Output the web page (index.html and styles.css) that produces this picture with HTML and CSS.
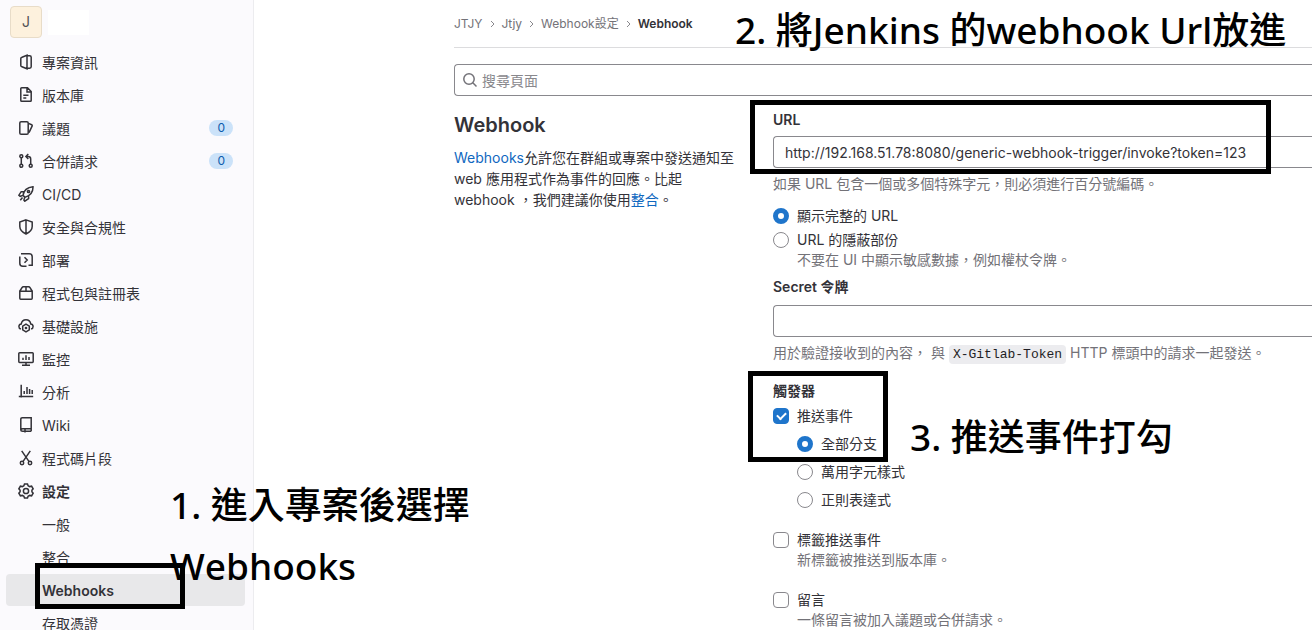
FILE: index.html
```html
<!DOCTYPE html>
<html lang="zh-Hant">
<head>
<meta charset="utf-8">
<title>Webhook</title>
<link rel="stylesheet" href="styles.css">
</head>
<body>
<div class="shell">
  <aside class="sidebar">
    <a class="project" href="#"><span class="avatar">J</span><span class="project-name"></span></a>
    <nav>
      <ul class="menu">
        <li><a class="item" href="#"><svg class="icon" viewBox="0 0 16 16"><path d="M9 1.2 4 3.2Q2.8 3.6 2.8 4.6v6.8q0 1 1.2 1.4l5 2zM9 1.8h2.6q1.6 0 1.6 1.4v9.6q0 1.4-1.6 1.4H9"/></svg><span class="name">專案資訊</span></a></li>
        <li><a class="item" href="#"><svg class="icon" viewBox="0 0 16 16"><path d="M3.7.8h5.8l3.7 3.7v9q0 .8-.8.8H3.7q-.9 0-.9-.9V1.7q0-.9.9-.9zM9 1v4h4M5.3 8.3h5.2M5.3 11h3"/></svg><span class="name">版本庫</span></a></li>
        <li><a class="item" href="#"><svg class="icon" viewBox="0 0 16 16"><rect x="1.8" y="1.8" width="8.4" height="12.4" rx="1.3"/><path d="m10.5 3.4 3.2 1.3q.8.4.5 1.2L11 12.6"/></svg><span class="name">議題</span><span class="badge">0</span></a></li>
        <li><a class="item" href="#"><svg class="icon" viewBox="0 0 16 16"><circle cx="3.3" cy="3.2" r="1.5"/><circle cx="3.3" cy="12.8" r="1.5"/><circle cx="12.7" cy="12.8" r="1.5"/><path d="M3.3 5v6M12.7 11V6q0-2.5-2.7-2.5H8.5M10.3 1 7.9 3.5 10.3 6"/></svg><span class="name">合併請求</span><span class="badge">0</span></a></li>
        <li><a class="item" href="#"><svg class="icon" viewBox="0 0 16 16"><path d="M5 9.4c.7-4.5 3.6-8 10-8.6.2 6-3.8 9.3-8 10.6zM5.9 5.7H3.2L.9 9.2l1.3 1.1 2.9-.9M10.6 9.8v2.8l-3.8 2.6-.9-1.2.9-2.7M4.5 11.5l-2.2 2.7"/><circle cx="10.5" cy="5.5" r="1.1"/></svg><span class="name">CI/CD</span></a></li>
        <li><a class="item" href="#"><svg class="icon" viewBox="0 0 16 16"><path d="M8 .9 14.2 3v4.6q0 4.5-6.2 7.4-6.2-2.9-6.2-7.4V3zM8 1v14"/></svg><span class="name">安全與合規性</span></a></li>
        <li><a class="item" href="#"><svg class="icon" viewBox="0 0 16 16"><path d="M3 1.8h8.2q3 0 3 3v8.4h-3.7M1.8 4.5v6.7q0 3 3 3h3.7M6.5 5.3 9.2 8l-2.7 2.7M1.8 6.2V4.5"/></svg><span class="name">部署</span></a></li>
        <li><a class="item" href="#"><svg class="icon" viewBox="0 0 16 16"><path d="M1.8 6.2h12.4v7.1q0 .9-.9.9H2.7q-.9 0-.9-.9zM1.9 6 4 2.6q.5-.8 1.4-.8h5.2q.9 0 1.4.8L14.1 6M8 1.8v4.4"/></svg><span class="name">程式包與註冊表</span></a></li>
        <li><a class="item" href="#"><svg class="icon" viewBox="0 0 16 16"><path d="M2.9 11C.2 10.2.2 6.6 3.2 6.1 3.7 3.2 6 1.7 8 1.7s4.3 1.5 4.8 4.4c3 .5 3 4.1.3 4.9M8 6.2l3.3 1.9v3.8L8 13.8l-3.3-1.9V8.1z"/><circle cx="8" cy="10" r=".6"/></svg><span class="name">基礎設施</span></a></li>
        <li><a class="item" href="#"><svg class="icon" viewBox="0 0 16 16"><rect x=".8" y="1.8" width="14.4" height="9.6" rx=".8"/><path d="M8 11.5v2.7M4 14.2h8M5 6.8V9M8 4.3V9M11 6v3"/></svg><span class="name">監控</span></a></li>
        <li><a class="item" href="#"><svg class="icon" viewBox="0 0 16 16"><path d="M3.2.8v12.8M.8 12.4h14.4M6.2 7v3M9 3v7M11.6 5v5M14.2 6v4"/></svg><span class="name">分析</span></a></li>
        <li><a class="item" href="#"><svg class="icon" viewBox="0 0 16 16"><path d="M4.2.8h9v11H4.6q-1.8 0-1.8 1.2t1.8 1.2h8.6M2.8 13V2.2q0-1.4 1.4-1.4M13.2 11.8v2.4M7 12v3.5"/></svg><span class="name">Wiki</span></a></li>
        <li><a class="item" href="#"><svg class="icon" viewBox="0 0 16 16"><circle cx="4" cy="13" r="1.7"/><circle cx="12" cy="13" r="1.7"/><path d="m3.7.8 7.2 10.5M12.3.8 5.1 11.3"/></svg><span class="name">程式碼片段</span></a></li>
        <li><a class="item current" href="#"><svg class="icon" viewBox="0 0 16 16"><path d="M6.5.9h3l.6 1.8 1.6.9 1.9-.4 1.5 2.6L13.9 7.2v1.6l1.2 1.4-1.5 2.6-1.9-.4-1.6.9-.6 1.8h-3l-.6-1.8-1.6-.9-1.9.4L.9 10.2l1.2-1.4V7.2L.9 5.8l1.5-2.6 1.9.4 1.6-.9z"/><circle cx="8" cy="8" r="2.6"/></svg><span class="name">設定</span></a>
          <ul class="menu submenu">
            <li><a class="item" href="#"><span class="name">一般</span></a></li>
            <li><a class="item" href="#"><span class="name">整合</span></a></li>
            <li><a class="item active" href="#"><span class="name">Webhooks</span></a></li>
            <li><a class="item" href="#"><span class="name">存取憑證</span></a></li>
          </ul>
        </li>
      </ul>
    </nav>
  </aside>

  <main class="content">
    <nav class="breadcrumb">
      <a href="#">JTJY</a><svg class="chevron" viewBox="0 0 7 8"><path d="m2 1 3 3-3 3"/></svg>
      <a href="#">Jtjy</a><svg class="chevron" viewBox="0 0 7 8"><path d="m2 1 3 3-3 3"/></svg>
      <a href="#">Webhook設定</a><svg class="chevron" viewBox="0 0 7 8"><path d="m2 1 3 3-3 3"/></svg>
      <a class="here" href="#">Webhook</a>
    </nav>
    <label class="search">
      <svg class="icon" viewBox="0 0 16 16"><circle cx="7" cy="7" r="5.2"/><path d="m10.8 10.8 3.7 3.7"/></svg>
      <input type="search" placeholder="搜尋頁面" aria-label="搜尋頁面">
    </label>

    <div class="columns">
      <section class="intro">
        <h1>Webhook</h1>
        <p><a href="#">Webhooks</a>允許您在群組或專案中發送通知至 web 應用程式作為事件的回應。比起 webhook ，我們建議你使用<a href="#">整合</a>。</p>
      </section>

      <form class="form">
        <div class="field">
          <label class="title" for="url">URL</label>
          <input class="text" id="url" type="text" value="http://192.168.51.78:8080/generic-webhook-trigger/invoke?token=123">
          <p class="help">如果 URL 包含一個或多個特殊字元，則必須進行百分號編碼。</p>
        </div>
        <div class="options">
          <label class="option"><input type="radio" name="mask" checked><span>顯示完整的 URL</span></label>
          <label class="option"><input type="radio" name="mask"><span>URL 的隱蔽部份</span></label>
          <p class="hint">不要在 UI 中顯示敏感數據，例如權杖令牌。</p>
        </div>
        <div class="field secret">
          <label class="title" for="token">Secret 令牌</label>
          <input class="text" id="token" type="text">
          <p class="help">用於驗證接收到的內容， 與 <code>X-Gitlab-Token</code> HTTP 標頭中的請求一起發送。</p>
        </div>
        <fieldset class="triggers">
          <legend class="title">觸發器</legend>
          <label class="option"><input type="checkbox" checked><span>推送事件</span></label>
          <div class="branches">
            <label class="option"><input type="radio" name="branch" checked><span>全部分支</span></label>
            <label class="option"><input type="radio" name="branch"><span>萬用字元樣式</span></label>
            <label class="option"><input type="radio" name="branch"><span>正則表達式</span></label>
          </div>
          <div class="event">
            <label class="option"><input type="checkbox"><span>標籤推送事件</span></label>
            <p class="hint">新標籤被推送到版本庫。</p>
          </div>
          <div class="event">
            <label class="option"><input type="checkbox"><span>留言</span></label>
            <p class="hint">一條留言被加入議題或合併請求。</p>
          </div>
        </fieldset>
      </form>
    </div>
  </main>

  <div class="frame frame-menu"></div>
  <div class="frame frame-url"></div>
  <div class="frame frame-trigger"></div>
  <div class="note note-menu">1. 進入專案後選擇<br>Webhooks</div>
  <div class="note note-url">2. 將Jenkins 的webhook Url放進</div>
  <div class="note note-trigger">3. 推送事件打勾</div>
</div>
</body>
</html>
```
FILE: styles.css
```css
* { box-sizing: border-box; }
body {
  margin: 0;
  background: #fff;
  color: #333238;
  font: 14px/20px Inter, "Noto Sans CJK TC", sans-serif;
}
a { color: #1068bf; text-decoration: none; }
p, h1, ul, fieldset, legend { margin: 0; padding: 0; border: 0; }
ul { list-style: none; }

.shell {
  position: relative;
  display: flex;
  height: 100vh;
  overflow: hidden;
}

.sidebar {
  flex: none;
  width: 254px;
  padding: 6px 8px 0 6px;
  border-right: 1px solid #ececef;
  background: #fbfafd;
}
.project {
  display: flex;
  align-items: center;
  gap: 6px;
  margin-bottom: 8px;
  padding-left: 4px;
}
.avatar {
  display: grid;
  place-items: center;
  width: 32px;
  height: 32px;
  border: 1px solid #e8dcc8;
  border-radius: 4px;
  background: #fdf1dd;
  color: #525156;
}
.project-name { width: 41px; height: 25px; background: #fff; }
.menu { display: grid; gap: 1px; }
.submenu { margin-top: 1px; }
.item {
  display: flex;
  align-items: center;
  gap: 8px;
  height: 32px;
  padding: 0 12px;
  border-radius: 4px;
  color: #333238;
}
.name { padding-top: 2px; }
.submenu .item { padding-left: 36px; }
.item.current, .item.active { font-weight: 600; }
.item.active { background: #e8e8ea; }
.icon {
  flex: none;
  width: 16px;
  height: 16px;
  fill: none;
  stroke: #333238;
  stroke-width: 1.5;
}
.badge {
  margin-left: auto;
  padding: 0 8px;
  border-radius: 8px;
  background: #cbe2f9;
  color: #0b5cad;
  font-size: 12px;
  line-height: 16px;
}

.content { flex: 1; min-width: 0; padding-left: 200px; }
.breadcrumb {
  display: flex;
  align-items: center;
  gap: 6px;
  height: 48px;
  border-bottom: 1px solid #dcdcde;
  font-size: 12px;
}
.breadcrumb a { color: #737278; }
.breadcrumb .here { color: #333238; font-weight: 600; }
.chevron { width: 7px; height: 8px; fill: none; stroke: #89888d; }
.search {
  display: flex;
  align-items: center;
  gap: 4px;
  height: 32px;
  margin-top: 16px;
  padding-left: 7px;
  border: 1px solid #89888d;
  border-right: 0;
  border-radius: 4px 0 0 4px;
}
.search .icon { stroke: #737278; }
.search input { flex: 1; padding: 2px 0 0; border: 0; outline: 0; background: none; font: inherit; }
.search input::placeholder { color: #89888d; }

.columns {
  display: grid;
  grid-template-columns: 283px 1fr;
  gap: 36px;
  padding-top: 14px;
}
.intro h1 { margin-bottom: 7px; font-size: 20px; line-height: 30px; font-weight: 600; }
.intro p { line-height: 21px; }

.title { display: block; font-weight: 600; }
.text {
  display: block;
  width: 100%;
  height: 32px;
  padding: 0 11px;
  border: 1px solid #89888d;
  border-right: 0;
  border-radius: 4px 0 0 4px;
  background: #fff;
  color: #333238;
  font: inherit;
}
.title + .text { margin-top: 6px; }
.secret .title + .text { margin-top: 8px; }
.help { margin-top: 6px; color: #737278; }
.hint { padding-left: 24px; color: #737278; }
code {
  padding: 2px 4px;
  border-radius: 4px;
  background: #ececef;
  color: #1f1e24;
  font: 13px "Liberation Mono", monospace;
}
.options { display: grid; margin: 10px 0 7px; }
.option { display: flex; align-items: center; gap: 8px; }
.options .option { height: 24px; }
.options .hint { margin-top: -2px; }
.option input {
  appearance: none;
  flex: none;
  width: 16px;
  height: 16px;
  margin: 0;
  border: 1px solid #89888d;
  border-radius: 4px;
  background: #fff;
}
.option input[type="radio"] { border-radius: 50%; }
.option input[type="radio"]:checked { border: 5px solid #1f75cb; }
.option input[type="checkbox"]:checked {
  display: grid;
  place-items: center;
  border-color: #1f75cb;
  background: #1f75cb;
}
.option input[type="checkbox"]:checked::before {
  content: "";
  width: 7px;
  height: 4px;
  margin-bottom: 2px;
  border: solid #fff;
  border-width: 0 0 2px 2px;
  transform: rotate(-45deg);
}
.triggers { margin-top: 18px; }
.triggers .title { margin-bottom: 5px; }
.branches { display: grid; gap: 8px; margin: 8px 0 20px; padding-left: 24px; }
.event { margin-bottom: 20px; }

.frame { position: absolute; border: 5px solid #000; }
.frame-menu { left: 35px; top: 563px; width: 150px; height: 46px; }
.frame-url { left: 750px; top: 100px; width: 521px; height: 74px; }
.frame-trigger { left: 748px; top: 371px; width: 140px; height: 91px; }
.note {
  position: absolute;
  color: #000;
  font: 500 37px/61px "Noto Sans", "Noto Sans CJK TC", sans-serif;
  font-kerning: none;
  white-space: nowrap;
}
.note-menu { left: 170px; top: 474px; }
.note-url { left: 735px; top: -1px; }
.note-trigger { left: 910px; top: 406px; }
```
